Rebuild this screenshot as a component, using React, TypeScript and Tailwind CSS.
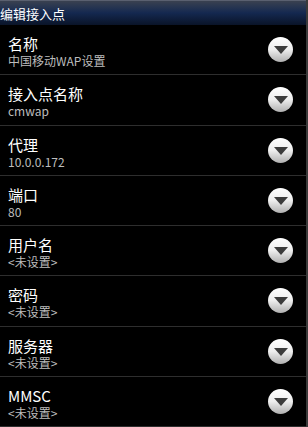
const ROWS = [
  { label: "名称", value: "中国移动WAP设置" },
  { label: "接入点名称", value: "cmwap" },
  { label: "代理", value: "10.0.0.172" },
  { label: "端口", value: "80" },
  { label: "用户名", value: "<未设置>" },
  { label: "密码", value: "<未设置>" },
  { label: "服务器", value: "<未设置>" },
  { label: "MMSC", value: "<未设置>" },
];

function DropButton() {
  return (
    <div className="w-[25px] h-[25px] rounded-full bg-gradient-to-b from-white via-[#eeeeee] to-[#b0b0b0] shadow-[0_1px_2px_rgba(0,0,0,0.6)] flex items-center justify-center shrink-0">
      <svg width="14" height="8" viewBox="0 0 14 8" className="mt-[1px]">
        <path d="M0 0h14L7 8z" fill="#3c3c3c" />
      </svg>
    </div>
  );
}

function Row({ label, value }: { label: string; value: string }) {
  return (
    <div className="h-[50.7px] border-b border-[#2e2e2e] flex items-center pl-[8px] pr-[13px]">
      <div className="flex-1 flex flex-col pt-[3px]">
        <span className="text-[15px] leading-[20px] text-white">{label}</span>
        <span className="text-[12px] leading-[14px] text-[#bdbdbd]">{value}</span>
      </div>
      <DropButton />
    </div>
  );
}

export default function App() {
  return (
    <div
      className="w-[308px] h-[427px] bg-black overflow-hidden flex"
      style={{ fontFamily: '"Noto Sans CJK SC", "Liberation Sans", sans-serif' }}
    >
      <div className="flex-1 flex flex-col">
        <div className="h-[25px] shrink-0 bg-gradient-to-b from-[#3a4150] via-[#142850] to-[#0a1428] border-t border-[#5a6070] flex items-center">
          <span className="text-[13px] text-white leading-none">编辑接入点</span>
        </div>
        {ROWS.map((r) => (
          <Row key={r.label} {...r} />
        ))}
      </div>
      <div className="w-[2px] bg-[#3a3a3a]" />
    </div>
  );
}
